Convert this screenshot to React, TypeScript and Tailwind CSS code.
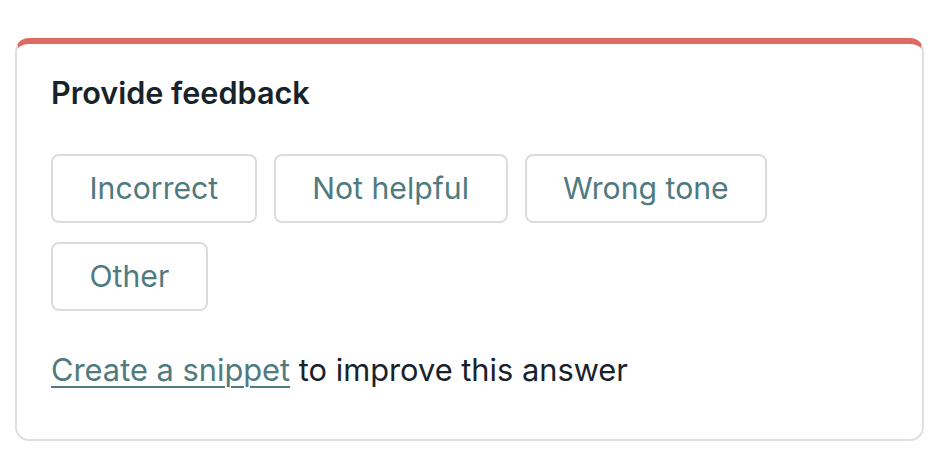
export default function App() {
  const options = ["Incorrect", "Not helpful", "Wrong tone", "Other"];
  return (
    <div className="min-h-screen bg-white px-[15px] pt-[38px]" style={{ fontFamily: "Inter, 'Noto Sans', sans-serif" }}>
      <div className="w-[909px] h-[403px] rounded-[14px] border-2 border-[#dedfe0] border-t-[6px] border-t-[#dd6b63] bg-white px-[34px] pt-[31px]">
        <h2 className="text-[30.6px] font-semibold leading-[36px] text-[#18222a]">Provide feedback</h2>
        <div className="mt-[43px] flex flex-wrap gap-x-[17px] gap-y-[19px]">
          {options.map((o) => (
            <button
              key={o}
              className="h-[69px] rounded-[8px] border-2 border-[#d9dde1] bg-white px-[36.5px] text-[30.2px] text-[#4f7a80]"
            >
              {o}
            </button>
          ))}
        </div>
        <p className="mt-[39px] text-[30.8px] leading-[40px] text-[#18222a]">
          <a href="#" className="text-[#4f7a80] underline decoration-2 underline-offset-[5px]">Create a snippet</a> to improve this answer
        </p>
      </div>
    </div>
  );
}
